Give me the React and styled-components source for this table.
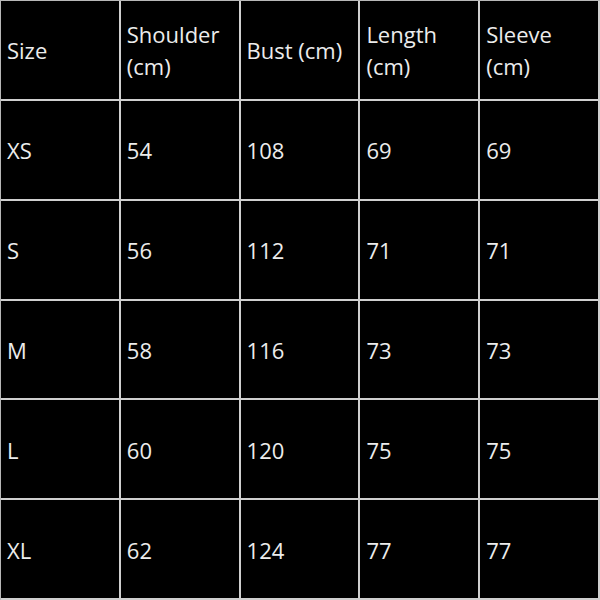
import React from "react";
import styled, { createGlobalStyle } from "styled-components";

const GlobalStyle = createGlobalStyle`
    html, body {
        margin: 0;
        padding: 0;
        background: #000;
    }
`;

const Table = styled.div`
    width: 600px;
    height: 600px;
    box-sizing: border-box;
    display: grid;
    grid-template-columns: repeat(5, 1fr);
    grid-template-rows: repeat(6, 1fr);
    background: #000;
    border-top: 1px solid #b8b8b8;
    border-left: 1px solid #b8b8b8;
    font-family: "Open Sans", "Noto Sans", sans-serif;
    font-size: 22px;
    line-height: 32px;
    color: #ececec;
`;

const Cell = styled.div`
    display: flex;
    align-items: center;
    padding: 1px 6px 0;
    border-right: 2px solid #cfcfcf;
    border-bottom: 2px solid #cfcfcf;
    box-sizing: border-box;
    white-space: pre-line;
`;

const headers = ["Size", "Shoulder\n(cm)", "Bust (cm)", "Length\n(cm)", "Sleeve\n(cm)"];

const rows = [
    ["XS", 54, 108, 69, 69],
    ["S", 56, 112, 71, 71],
    ["M", 58, 116, 73, 73],
    ["L", 60, 120, 75, 75],
    ["XL", 62, 124, 77, 77],
];

const App = () => {
    return (
        <>
            <GlobalStyle />
            <Table>
                {headers.map((h) => (
                    <Cell key={h}>{h}</Cell>
                ))}
                {rows.map((row) =>
                    row.map((v, i) => <Cell key={row[0] + i}>{v}</Cell>)
                )}
            </Table>
        </>
    );
};

export default App;
